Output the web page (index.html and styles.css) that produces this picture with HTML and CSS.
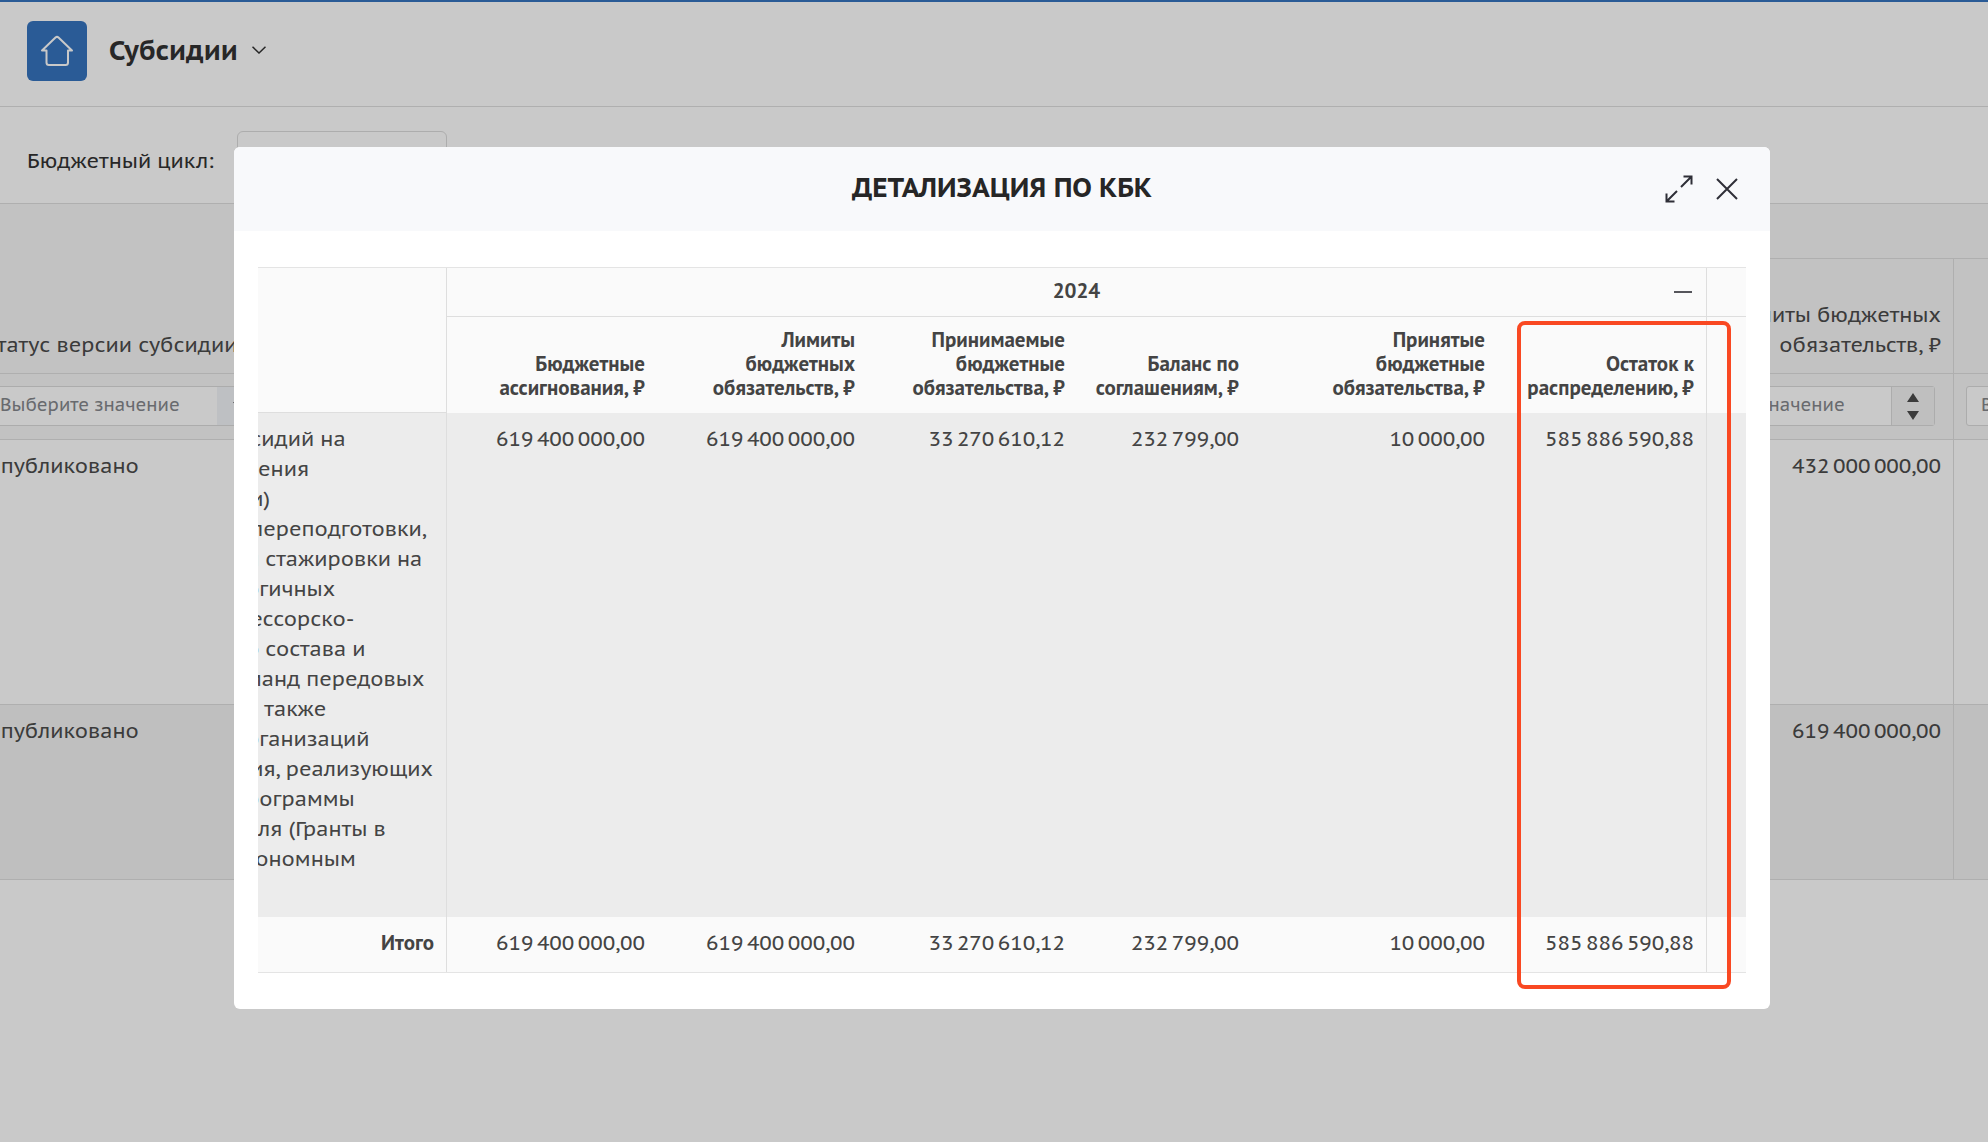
FILE: index.html
```html
<!DOCTYPE html>
<html lang="ru">
<head>
<meta charset="utf-8">
<meta name="viewport" content="width=device-width, initial-scale=1">
<title>Субсидии</title>
<link rel="stylesheet" href="styles.css">
</head>
<body>
<div class="page">
  <header class="topbar">
    <a class="home" href="#" aria-label="Главная">
      <svg width="34" height="34" viewBox="0 0 34 34" fill="none" stroke="currentColor" stroke-width="2" stroke-linejoin="round" stroke-linecap="round"><path d="M2 16.500 15.500 3.500Q17 2.200 18.500 3.500L32 16.500H28V28.500Q28 31 25.500 31H9Q6.500 31 6.500 28.500V16.500Z"/></svg>
    </a>
    <button class="app-title" type="button">Субсидии
      <svg width="14" height="8" viewBox="0 0 14 8" fill="none" stroke="currentColor" stroke-width="1.500"><path d="M.5.8 7 7 13.500.8"/></svg>
    </button>
  </header>
  <div class="filterbar">
    <label for="cycle">Бюджетный цикл:</label>
    <select id="cycle" class="cycle"><option></option></select>
  </div>
  <main class="grid-wrap">
    <table class="grid">
      <colgroup><col class="c-status"><col><col class="c-limit"><col class="c-next"></colgroup>
      <thead>
        <tr class="group-row"><th rowspan="2" class="left">Статус версии субсидии</th><th rowspan="2"></th><th colspan="2" class="group"></th></tr>
        <tr class="names-row"><th>Лимиты бюджетных обязательств, ₽</th><th></th></tr>
        <tr class="search-row">
          <td><div class="search pick"><input type="text" placeholder="Выберите значение" aria-label="Статус"><button type="button" aria-label="Открыть список"><svg width="12" height="8" viewBox="0 0 12 8" fill="currentColor"><path d="M0 0H12L6 8Z"/></svg></button></div></td>
          <td></td>
          <td><div class="search"><input type="text" placeholder="Выберите значение" aria-label="Лимиты"><button type="button" aria-label="Изменить значение"><svg width="12" height="27" viewBox="0 0 12 27" fill="currentColor"><path d="M6 0 12 9H0ZM0 18H12L6 27Z"/></svg></button></div></td>
          <td><div class="search"><input type="text" placeholder="Выберите значение" aria-label="Значение"></div></td>
        </tr>
      </thead>
      <tbody>
        <tr class="row-a"><td>Опубликовано</td><td></td><td class="num">432&#8198;000&#8198;000,00</td><td></td></tr>
        <tr class="row-b"><td>Опубликовано</td><td></td><td class="num">619&#8198;400&#8198;000,00</td><td></td></tr>
      </tbody>
    </table>
  </main>
</div>

<div class="overlay">
  <section class="modal" role="dialog" aria-modal="true" aria-labelledby="dlg">
    <div class="modal-head">
      <h2 id="dlg">ДЕТАЛИЗАЦИЯ ПО КБК</h2>
      <div class="tools">
        <button type="button" aria-label="Развернуть"><svg width="28" height="28" viewBox="0 0 28 28" fill="none" stroke="currentColor" stroke-width="2"><path d="M16 12 26 2M18.500 1.500H26.500V9.500M12 16 2 26M1.500 18.500V26.500H9.500"/></svg></button>
        <button type="button" aria-label="Закрыть"><svg width="22" height="22" viewBox="0 0 22 22" fill="none" stroke="currentColor" stroke-width="2"><path d="M1 1 21 21M21 1 1 21"/></svg></button>
      </div>
    </div>
    <div class="modal-body">
      <table class="detail">
        <colgroup><col><col class="w-m"><col class="w-m"><col class="w-m"><col class="w-s"><col class="w-l"><col class="w-m"><col class="w-end"></colgroup>
        <thead>
          <tr class="years"><th rowspan="2" class="edge"></th><th colspan="6" class="year edge">2024<button type="button" class="fold" aria-label="Свернуть"></button></th><th></th></tr>
          <tr class="heads">
            <th>Бюджетные ассигнования, ₽</th>
            <th>Лимиты<br>бюджетных обязательств, ₽</th>
            <th>Принимаемые бюджетные обязательства, ₽</th>
            <th>Баланс по соглашениям, ₽</th>
            <th>Принятые<br>бюджетные<br>обязательства, ₽</th>
            <th class="edge">Остаток к распределению, ₽</th>
            <th></th>
          </tr>
        </thead>
        <tbody>
          <tr>
            <td class="name edge"><div class="scrolled">&#8201;сидий на<br>чения<br>&#8201;и)<br>&#8201;переподготовки,<br>и стажировки на<br>огичных<br>&#8201;ессорско-<br>о состава и<br>манд передовых<br>а также<br>рганизаций<br>&#8201;ия, реализующих<br>рограммы<br>еля (Гранты в<br>тономным</div></td>
            <td>619&#8198;400&#8198;000,00</td><td>619&#8198;400&#8198;000,00</td><td>33&#8198;270&#8198;610,12</td><td>232&#8198;799,00</td><td>10&#8198;000,00</td><td class="edge">585&#8198;886&#8198;590,88</td><td></td>
          </tr>
        </tbody>
        <tfoot>
          <tr>
            <th class="edge" scope="row">Итого</th>
            <td>619&#8198;400&#8198;000,00</td><td>619&#8198;400&#8198;000,00</td><td>33&#8198;270&#8198;610,12</td><td>232&#8198;799,00</td><td>10&#8198;000,00</td><td class="edge">585&#8198;886&#8198;590,88</td><td></td>
          </tr>
        </tfoot>
      </table>
    </div>
    <div class="marker"></div>
  </section>
</div>
</body>
</html>
```
FILE: styles.css
```css
* { box-sizing: border-box; }

body {
  margin: 0;
  min-height: 100vh;
  background: #fff;
  color: #494949;
  font: 21px/30px "PT Sans Caption", "Noto Sans", "Open Sans", sans-serif;
}

button, input, select { font: inherit; color: inherit; }
button { padding: 0; border: 0; background: none; }
svg { display: block; }
table { border-collapse: separate; border-spacing: 0; table-layout: fixed; }
th { font-weight: 400; text-align: right; }
th, td { padding: 0; }

.page { overflow: hidden; }

/* Top bar */
.topbar {
  display: flex;
  align-items: center;
  gap: 22px;
  height: 107px;
  padding: 0 27px 6px;
  border-top: 2px solid #3674bf;
  border-bottom: 1px solid #dedede;
}
.home {
  display: grid;
  place-items: center;
  width: 60px;
  height: 60px;
  border-radius: 6px;
  background: #3674bf;
  color: #fff;
}
.app-title {
  display: flex;
  align-items: center;
  gap: 14px;
  padding-bottom: 2px;
  color: #323232;
  font-size: 27px;
  font-weight: 700;
}

/* Filter bar */
.filterbar {
  display: flex;
  align-items: center;
  gap: 24px;
  height: 97px;
  padding: 24px 27px 12px;
  border-bottom: 1px solid #dedede;
  color: #323232;
}
.filterbar label { width: 186px; white-space: nowrap; }
.cycle {
  width: 210px;
  height: 60px;
  border: 1px solid #dcdcdc;
  border-radius: 6px;
  background: #fff;
  appearance: none;
}

/* Background grid, scrolled sideways */
.grid {
  width: calc(100% + 320px);
  margin-left: -27px;
  color: #4b4b4b;
}
.c-status { width: 307px; }
.c-limit { width: 316px; }
.c-next { width: 327px; }
.grid th, .grid td {
  border-right: 1px solid #dedede;
  border-bottom: 1px solid #dedede;
  padding: 0 12px;
  vertical-align: top;
}
.grid thead { background: #f7f7f7; }
.grid thead th { vertical-align: bottom; padding-bottom: 13px; }
.grid .left { text-align: left; white-space: nowrap; }
.group-row { height: 55px; }
.names-row { height: 115px; }
.search-row { height: 66px; }
.grid .search-row td { padding-top: 12px; }
.search {
  display: flex;
  height: 40px;
  margin-right: 6px;
  border: 1px solid #dadada;
  border-radius: 3px;
  background: #fff;
}
.search input {
  flex: 1;
  min-width: 0;
  padding: 0 0 3px 14px;
  border: 0;
  background: none;
  font-size: 18px;
}
.search input::placeholder { color: #85878c; opacity: 1; }
.search button {
  display: grid;
  place-items: center;
  width: 43px;
  border-left: 1px solid #dadada;
  background: #f3f3f3;
}
.pick button { border-left: 0; background: #f1f4f8; }
.grid tbody td { padding-top: 11px; }
.row-a { height: 265px; }
.row-b { height: 175px; background: #f3f3f3; }
.num { text-align: right; }

/* Modal */
.overlay {
  position: fixed;
  inset: 0;
  padding: 147px 218px 0 234px;
  background: rgba(0, 0, 0, .21);
}
.modal {
  position: relative;
  overflow: hidden;
  border-radius: 6px;
  background: #fff;
}
.modal-head {
  display: grid;
  grid-template-columns: 1fr auto 1fr;
  align-items: center;
  height: 84px;
  padding: 0 32px;
  background: #f8f9fb;
}
.modal-head h2 {
  grid-column: 2;
  margin: 0;
  padding-bottom: 4px;
  color: #262626;
  font-size: 27px;
  font-weight: 700;
}
.tools {
  display: flex;
  justify-content: flex-end;
  align-items: center;
  gap: 23px;
  color: #2f2f37;
}
.modal-body { padding: 36px 24px; }

.detail {
  width: 100%;
  border-top: 1px solid #e4e4e4;
  border-bottom: 1px solid #e4e4e4;
  background: #fafafa;
  color: #444;
}
.w-s { width: 174px; }
.w-m { width: 210px; }
.w-l { width: 246px; }
.w-end { width: 39px; }
.detail th, .detail td { padding: 0 12px; text-align: right; }
.detail th { font-family: "PT Sans", "Noto Sans", sans-serif; font-weight: 700; }
.detail .edge { border-right: 1px solid #dedede; }
.years { height: 49px; }
.years th { border-bottom: 1px solid #dedede; }
.detail .year { position: relative; padding-bottom: 2px; text-align: center; }
.fold {
  position: absolute;
  right: 14px;
  top: 14px;
  width: 18px;
  height: 20px;
}
.fold::before {
  content: "";
  display: block;
  border-top: 2px solid #55555b;
}
.heads { height: 96px; }
.detail .heads th {
  padding: 0 12px 13px 0;
  vertical-align: bottom;
  line-height: 24px;
}
.detail tbody td {
  height: 504px;
  padding-top: 11px;
  vertical-align: top;
  background: #ececec;
}
.detail .name { padding-left: 0; padding-right: 0; overflow: hidden; text-align: left; }
.scrolled { margin-left: -12px; white-space: nowrap; }
.detail tfoot tr { height: 55px; }
.detail tfoot th, .detail tfoot td { padding-top: 11px; vertical-align: top; }

/* Highlight around the last amount column */
.marker {
  position: absolute;
  top: 174px;
  right: 39px;
  bottom: 20px;
  width: 214px;
  border: 4px solid #f94822;
  border-radius: 8px;
  pointer-events: none;
}
```
